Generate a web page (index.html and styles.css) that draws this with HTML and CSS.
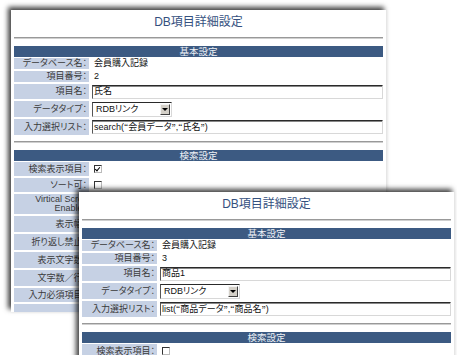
FILE: index.html
```html
<!DOCTYPE html>
<html lang="ja">
<head>
    <meta charset="UTF-8">
    <title>DB項目詳細設定</title>
    <link rel="stylesheet" href="styles.css">
</head>
<body>
    <div class="desk">
        <!-- 後ろのウィンドウ -->
        <div class="win win-back">
            <h1 class="title">DB項目詳細設定</h1>
            <hr class="rule">
            <div class="bar">基本設定</div>
            <div class="rows">
                <div class="row"><div class="label">データベース名：</div><div class="val"><span class="txt">会員購入記録</span></div></div>
                <div class="row"><div class="label">項目番号：</div><div class="val"><span class="txt">2</span></div></div>
                <div class="row h15"><div class="label">項目名：</div><div class="val"><div class="field">氏名</div></div></div>
                <div class="row h16"><div class="label">データタイプ：</div><div class="val"><div class="select">RDBリンク<span class="arrow"></span></div></div></div>
                <div class="row h16"><div class="label">入力選択リスト：</div><div class="val"><div class="field">search(<span class="q">“</span>会員データ<span class="q">”</span>,<span class="q">“</span>氏名<span class="q">”</span>)</div></div></div>
            </div>
            <hr class="rule">
            <div class="bar">検索設定</div>
            <div class="rows">
                <div class="row h14"><div class="label">検索表示項目：</div><div class="val"><span class="box on"></span></div></div>
                <div class="row h14"><div class="label">ソート可：</div><div class="val"><span class="box"></span></div></div>
                <div class="row h20"><div class="label">Virtical Scroll<br>Enable：</div><div class="val"><span class="box"></span></div></div>
                <div class="row h16"><div class="label">表示幅：</div><div class="val"><div class="field short">100</div></div></div>
                <div class="row h16"><div class="label">折り返し禁止：</div><div class="val"><span class="box"></span></div></div>
                <div class="row h16"><div class="label">表示文字数：</div><div class="val"><div class="field short">20</div></div></div>
                <div class="row h16"><div class="label">文字数／行：</div><div class="val"><div class="field short">20</div></div></div>
                <div class="row h14"><div class="label">入力必須項目：</div><div class="val"><span class="box"></span></div></div>
                <div class="row h14"><div class="label"></div><div class="val"></div></div>
            </div>
        </div>

        <!-- 前のウィンドウ -->
        <div class="win win-front">
            <h1 class="title">DB項目詳細設定</h1>
            <hr class="rule">
            <div class="bar">基本設定</div>
            <div class="rows">
                <div class="row"><div class="label">データベース名：</div><div class="val"><span class="txt">会員購入記録</span></div></div>
                <div class="row"><div class="label">項目番号：</div><div class="val"><span class="txt">3</span></div></div>
                <div class="row h15"><div class="label">項目名：</div><div class="val"><div class="field">商品1</div></div></div>
                <div class="row h16"><div class="label">データタイプ：</div><div class="val"><div class="select">RDBリンク<span class="arrow"></span></div></div></div>
                <div class="row h16"><div class="label">入力選択リスト：</div><div class="val"><div class="field">list(<span class="q">“</span>商品データ<span class="q">”</span>,<span class="q">“</span>商品名<span class="q">”</span>)</div></div></div>
            </div>
            <hr class="rule">
            <div class="bar">検索設定</div>
            <div class="rows">
                <div class="row h14"><div class="label">検索表示項目：</div><div class="val"><span class="box"></span></div></div>
                <div class="row h14"><div class="label">ソート可：</div><div class="val"><span class="box"></span></div></div>
            </div>
        </div>
    </div>
</body>
</html>
```

FILE: styles.css
```css
* {
    box-sizing: border-box;
}

body {
    margin: 0;
    background-color: #fff;
    font-family: "Liberation Sans", "Noto Sans CJK JP", sans-serif;
    font-feature-settings: "palt";
    color: #222;
}

.desk {
    position: relative;
    width: 457px;
    height: 355px;
    overflow: hidden;
}

/* ウィンドウ */
.win {
    position: absolute;
    width: 376px;
    padding: 3px 3px 0;
    background-color: #fff;
    border-right: 1px solid #e6e6e6;
    box-shadow: -3px -3px 5px rgba(0, 0, 0, 0.75);
    overflow: hidden;
}

.win-back {
    left: 11px;
    top: 10px;
    height: 302px;
}

.win-front {
    left: 79px;
    top: 192px;
    height: 180px;
}

.title {
    margin: 0;
    height: 18px;
    line-height: 18px;
    font-size: 12px;
    font-weight: normal;
    text-align: center;
    color: #34507e;
}

.rule {
    margin: 6px 0 7px;
    height: 2px;
    border: 0;
    border-top: 1px solid #999;
    border-bottom: 1px solid #cfcfcf;
}

.bar {
    height: 11px;
    line-height: 11px;
    background-color: #3c5a82;
    color: #eef1f6;
    font-size: 9.5px;
    text-align: center;
}

.rows {
    display: flex;
    flex-direction: column;
    gap: 2px;
    padding-top: 1px;
}

.row {
    display: grid;
    grid-template-columns: 75px 1fr;
    column-gap: 2px;
    height: 11px;
    font-size: 9px;
}

.row.h14 { height: 14px; }
.row.h15 { height: 15px; }
.row.h16 { height: 16px; }
.row.h20 { height: 20px; }

.label {
    display: flex;
    align-items: center;
    justify-content: flex-end;
    padding-right: 2px;
    background-color: #c6d1e4;
    color: #3a3a3a;
    text-align: right;
    line-height: 9px;
    white-space: nowrap;
}

.val {
    display: flex;
    align-items: center;
    padding-left: 1px;
    line-height: 11px;
    color: #111;
}

.txt {
    padding-left: 2px;
}

/* 入力欄 */
.field {
    display: flex;
    align-items: center;
    width: 291px;
    height: 14px;
    padding-left: 1px;
    border: 1px solid;
    border-color: #2a2a2a #d8d8d8 #d8d8d8 #555;
    box-shadow: inset 0 1px 0 #888;
    background-color: #fff;
    white-space: nowrap;
    overflow: hidden;
}

.field .q {
    font-family: "Noto Sans CJK JP", sans-serif;
    font-feature-settings: normal;
}

.field.short {
    width: 40px;
}

.select {
    display: flex;
    align-items: center;
    justify-content: space-between;
    width: 80px;
    height: 15px;
    padding: 0 1px 0 3px;
    border: 1px solid;
    border-color: #2a2a2a #d8d8d8 #d8d8d8 #555;
    background-color: #fff;
}

.arrow {
    position: relative;
    width: 10px;
    height: 11px;
    background-color: #d4d0c8;
    border: 1px solid;
    border-color: #f4f4f4 #404040 #404040 #f4f4f4;
}

.arrow::after {
    content: "";
    position: absolute;
    left: 1px;
    top: 3px;
    border-left: 3px solid transparent;
    border-right: 3px solid transparent;
    border-top: 3px solid #000;
}

/* チェックボックス */
.box {
    position: relative;
    width: 8px;
    height: 8px;
    margin-left: 2px;
    border: 1px solid;
    border-color: #333 #bbb #bbb #333;
    background-color: #fff;
}

.box.on::after {
    content: "";
    position: absolute;
    left: 1px;
    top: 0;
    width: 2px;
    height: 4px;
    border-right: 1.5px solid #000;
    border-bottom: 1.5px solid #000;
    transform: rotate(40deg);
}
```
